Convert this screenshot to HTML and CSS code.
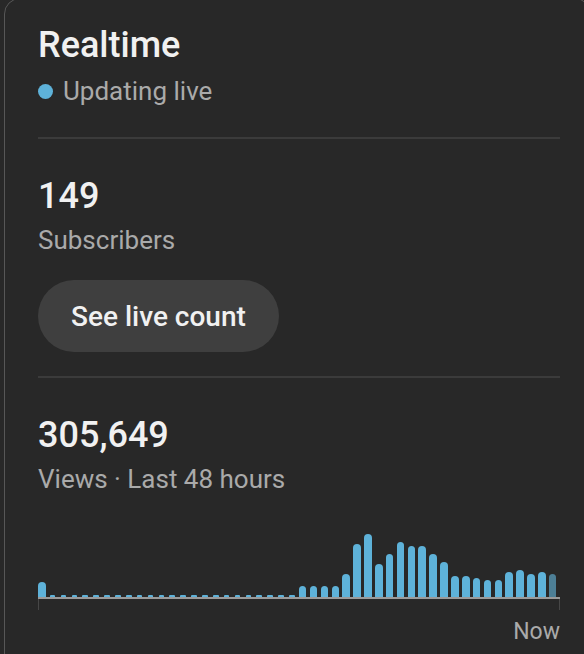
FILE: index.html
```html
<!DOCTYPE html>
<html lang="en">
<head>
  <meta charset="UTF-8">
  <meta name="viewport" content="width=device-width, initial-scale=1.0">
  <title>Realtime</title>
  <link rel="stylesheet" href="styles.css">
</head>
<body>
  <div class="card">
    <!-- Header -->
    <div class="card-header">
      <h2 class="title">Realtime</h2>
      <div class="live"><span class="dot"></span>Updating live</div>
    </div>

    <div class="divider"></div>

    <!-- Subscribers -->
    <div class="stat">
      <div class="stat-value">149</div>
      <div class="stat-label">Subscribers</div>
      <button class="live-button">See live count</button>
    </div>

    <div class="divider"></div>

    <!-- Views -->
    <div class="stat">
      <div class="stat-value">305,649</div>
      <div class="stat-label">Views · Last 48 hours</div>
      <div class="chart">
        <div id="bars" class="bars"></div>
        <div class="axis"></div>
        <div class="axis-end">Now</div>
      </div>
    </div>
  </div>

  <script>
    // Views per hour, oldest first (bar height in px)
    const hourly = [15,
      2, 2, 2, 2, 2, 2, 2, 2, 2, 2, 2, 2, 2, 2, 2, 2, 2, 2, 2, 2, 2, 2, 2,
      11, 11, 11, 11, 23, 53, 63, 33, 43, 55, 51, 51,
      43, 35, 21, 21, 19, 17, 17, 25, 27, 23, 25, 23];

    const bars = document.getElementById('bars');
    hourly.forEach((h, i) => {
      const bar = document.createElement('div');
      bar.className = 'bar';
      if (i === hourly.length - 1) bar.classList.add('current');
      if (h <= 2) bar.classList.add('empty');
      bar.style.height = h + 'px';
      bars.appendChild(bar);
    });
  </script>
</body>
</html>
```

FILE: styles.css
```css
/* General */
body {
  margin: 0;
  background: #282828;
  font-family: Roboto, 'Liberation Sans', Arial, sans-serif;
  color: #f1f1f1;
  overflow: hidden;
}

.card {
  box-sizing: border-box;
  width: 587px;
  margin: -2px 0 0 4px;
  padding: 26px 30px 40px 33px;
  background: #282828;
  border: 1px solid #575757;
  border-radius: 16px;
}

/* Header */
.title {
  margin: 0;
  font-size: 36px;
  line-height: 40px;
  font-weight: 500;
}

.live {
  display: flex;
  align-items: center;
  margin-top: 10px;
  font-size: 26px;
  line-height: 32px;
  color: #aaaaaa;
}

.dot {
  width: 15px;
  height: 15px;
  margin-right: 10px;
  border-radius: 50%;
  background: #5eb2d9;
}

.divider {
  height: 2px;
  background: #3b3b3b;
  margin-top: 30px;
}

/* Stats */
.stat {
  padding-top: 37px;
}

.stat-value {
  font-size: 36px;
  line-height: 40px;
  font-weight: 500;
}

.stat-label {
  margin-top: 8px;
  font-size: 26px;
  line-height: 32px;
  color: #aaaaaa;
}

.live-button {
  height: 72px;
  margin-top: 24px;
  margin-bottom: 24px;
  padding: 0 33px;
  border: none;
  border-radius: 36px;
  background: #3f3f3f;
  color: #f1f1f1;
  font-family: inherit;
  font-size: 28px;
  font-weight: 500;
  cursor: pointer;
}

.stat + .divider {
  margin-top: 0;
}

/* Chart */
.chart {
  margin-top: 32px;
}

.bars {
  display: grid;
  grid-template-columns: repeat(48, 1fr);
  column-gap: 3.3px;
  align-items: end;
  height: 70px;
  padding-right: 3.5px;
}

.bar {
  background: #5eb2d9;
  border-radius: 4px 4px 0 0;
}

.bar.empty {
  margin: 0 1px;
  border-radius: 1px 1px 0 0;
}

.bar.current {
  background: #4d7f96;
}

.axis {
  position: relative;
  height: 2px;
  background: #9a9a9a;
}

.axis::before,
.axis::after {
  content: '';
  position: absolute;
  top: 2px;
  width: 1px;
  height: 11px;
  background: #474747;
}

.axis::before {
  left: 0;
}

.axis::after {
  right: 0;
}

.axis-end {
  margin-top: 19px;
  text-align: right;
  font-size: 23px;
  line-height: 28px;
  color: #aaaaaa;
}
```
